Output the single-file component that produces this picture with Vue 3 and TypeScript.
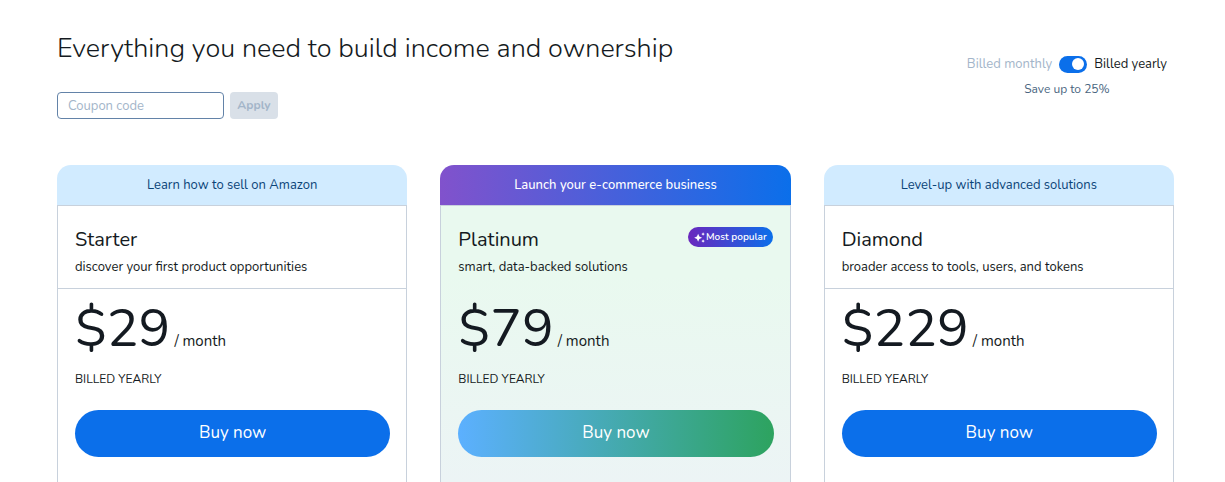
<script setup lang="ts">
import { computed, ref } from 'vue'

interface Plan {
  name: string
  banner: string
  summary: string
  price: number
  featured: boolean
}

const plans: Plan[] = [
  {
    name: 'Starter',
    banner: 'Learn how to sell on Amazon',
    summary: 'discover your first product opportunities',
    price: 29,
    featured: false,
  },
  {
    name: 'Platinum',
    banner: 'Launch your e-commerce business',
    summary: 'smart, data-backed solutions',
    price: 79,
    featured: true,
  },
  {
    name: 'Diamond',
    banner: 'Level-up with advanced solutions',
    summary: 'broader access to tools, users, and tokens',
    price: 229,
    featured: false,
  },
]

const coupon = ref('')
const yearly = ref(true)
const canApply = computed(() => coupon.value.trim().length > 0)
</script>

<template>
  <main class="page">
    <header class="top">
      <div class="intro">
        <h1 class="title">Everything you need to build income and ownership</h1>
        <form class="coupon" @submit.prevent>
          <input v-model="coupon" class="coupon-input" type="text" placeholder="Coupon code" aria-label="Coupon code" />
          <button class="apply" type="submit" :disabled="!canApply">Apply</button>
        </form>
      </div>
      <div class="billing">
        <div class="billing-row">
          <label for="billing-switch" :class="{ muted: yearly }">Billed monthly</label>
          <input id="billing-switch" v-model="yearly" class="switch" type="checkbox" role="switch" />
          <label for="billing-switch" :class="{ muted: !yearly }">Billed yearly</label>
        </div>
        <p class="saving">Save up to 25%</p>
      </div>
    </header>

    <section class="plans">
      <article v-for="plan in plans" :key="plan.name" class="plan" :class="{ featured: plan.featured }">
        <div class="banner">{{ plan.banner }}</div>
        <div class="body">
          <div class="head">
            <div class="name-row">
              <h2 class="name">{{ plan.name }}</h2>
              <span v-if="plan.featured" class="badge">
                <svg class="sparkle" viewBox="0 0 12 12" aria-hidden="true">
                  <path d="M4.5 1.9 5.8 4.9 8.8 6.2 5.8 7.5 4.5 10.5 3.2 7.5.2 6.2 3.2 4.9Z" />
                  <path d="M9.9.4 10.5 1.7 11.8 2.3 10.5 2.9 9.9 4.2 9.3 2.9 8 2.3 9.3 1.7Z" />
                  <path d="M9.9 8 10.5 9.3 11.8 9.9 10.5 10.5 9.9 11.8 9.3 10.5 8 9.9 9.3 9.3Z" />
                </svg>
                Most popular
              </span>
            </div>
            <p class="summary">{{ plan.summary }}</p>
          </div>
          <div class="offer">
            <p class="price"><span class="amount">${{ plan.price }}</span><span>/ month</span></p>
            <p class="term">BILLED {{ yearly ? 'YEARLY' : 'MONTHLY' }}</p>
            <button class="buy" type="button">Buy now</button>
          </div>
        </div>
      </article>
    </section>
  </main>
</template>

<style>
body {
  margin: 0;
  background: #fff;
}
</style>

<style scoped>
.page,
.page * {
  box-sizing: border-box;
}

.page {
  display: flex;
  flex-direction: column;
  min-height: 100vh;
  padding: 30px 51px 0 57px;
  color: #141a21;
  font-family: Nunito, Lato, sans-serif;
  font-size: 13px;
  line-height: 20px;
}

h1,
h2,
p {
  margin: 0;
  font-weight: 400;
}

input,
button {
  margin: 0;
  font-family: inherit;
}

.top {
  display: flex;
  justify-content: space-between;
  align-items: flex-start;
}

.title {
  font-size: 27px;
  font-weight: 350;
  line-height: 38px;
}

.coupon {
  display: flex;
  gap: 6px;
  margin-top: 24px;
}

.coupon-input {
  width: 167px;
  height: 27px;
  padding: 0 10px;
  border: 1px solid #6383a8;
  border-radius: 4px;
  background: #fff;
  color: #141a21;
  font-size: 13px;
}

.coupon-input::placeholder {
  color: #a3b5c9;
  opacity: 1;
}

.apply {
  width: 48px;
  height: 27px;
  padding: 0 0 2px;
  border: 0;
  border-radius: 4px;
  background: #0b6fea;
  color: #fff;
  font-size: 12px;
  font-weight: 700;
}

.apply:disabled {
  background: #d9e0e8;
  color: #a3b5c9;
}

.billing {
  margin-top: 24px;
  padding-right: 7px;
  text-align: center;
}

.billing-row {
  display: flex;
  align-items: center;
  gap: 7px;
}

.muted {
  color: #a3b5c9;
}

.switch {
  display: flex;
  align-items: center;
  width: 28px;
  height: 17px;
  padding: 0 3px;
  border-radius: 9px;
  appearance: none;
  background: #a3b5c9;
}

.switch::before {
  content: '';
  width: 12px;
  height: 12px;
  border-radius: 50%;
  background: #fff;
}

.switch:checked {
  justify-content: flex-end;
  background: #0b6fea;
}

.saving {
  margin-top: 5px;
  color: #4a6580;
  font-size: 12px;
}

.plans {
  display: grid;
  flex: 1;
  grid-template-columns: repeat(3, 1fr);
  gap: 33px;
  margin-top: 46px;
}

.plan {
  display: flex;
  flex-direction: column;
}

.banner {
  padding: 10px;
  border-radius: 14px 14px 0 0;
  background: #d1ebff;
  color: #0b4478;
  text-align: center;
}

.body {
  flex: 1;
  border: 1px solid #c8d1dc;
  border-bottom: 0;
}

.head {
  padding: 21px 17px 11px;
  border-bottom: 1px solid #c8d1dc;
}

.name-row {
  display: flex;
  justify-content: space-between;
  align-items: flex-start;
  margin-bottom: 6px;
}

.name {
  font-size: 20px;
  line-height: 25px;
  height: 24px;
}

.badge {
  display: flex;
  align-items: center;
  gap: 1px;
  height: 20px;
  padding: 0 6px;
  border-radius: 10px;
  background: linear-gradient(90deg, #6a27bd, #0b6fea);
  color: #fff;
  font-size: 10px;
  font-weight: 600;
}

.sparkle {
  width: 11px;
  height: 11px;
  fill: #fff;
}

.offer {
  padding: 10px 16px 24px 17px;
}

.price {
  display: flex;
  align-items: baseline;
  gap: 4px;
  font-size: 15px;
}

.amount {
  font-size: 53px;
  line-height: 60px;
}

.term {
  margin-top: 10px;
  font-size: 12px;
}

.buy {
  width: 100%;
  height: 47px;
  margin-top: 21px;
  padding: 0 0 2px;
  border: 0;
  border-radius: 24px;
  background: #0b6fea;
  color: #fff;
  font-size: 17px;
}

.featured .banner {
  background: linear-gradient(90deg, #8152cc, #0b6fea);
  color: #fff;
  font-weight: 500;
}

.featured .body {
  background: linear-gradient(180deg, #e9f9ef 25%, #ecf4f5);
}

.featured .head {
  border-bottom-color: transparent;
}

.featured .buy {
  background: linear-gradient(90deg, #5cb0ff, #2da35f);
}
</style>
